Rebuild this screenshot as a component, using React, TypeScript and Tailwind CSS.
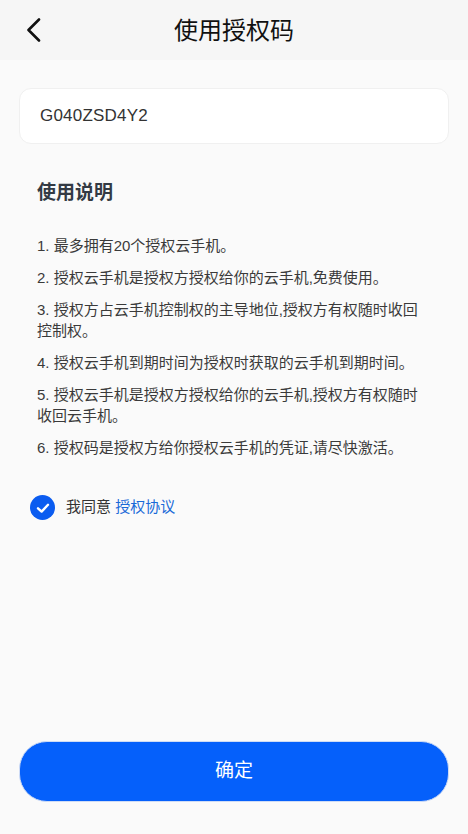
import React from "react";

const rules = [
  "1. 最多拥有20个授权云手机。",
  "2. 授权云手机是授权方授权给你的云手机,免费使用。",
  "3. 授权方占云手机控制权的主导地位,授权方有权随时收回控制权。",
  "4. 授权云手机到期时间为授权时获取的云手机到期时间。",
  "5. 授权云手机是授权方授权给你的云手机,授权方有权随时收回云手机。",
  "6. 授权码是授权方给你授权云手机的凭证,请尽快激活。",
];

const font = { fontFamily: '"Liberation Sans", "Noto Sans CJK SC", sans-serif' };

export default function App() {
  return (
    <div className="min-h-screen flex flex-col bg-[#fafafa]" style={font}>
      {/* header */}
      <div className="h-[60px] grid grid-cols-[60px_1fr_60px] items-center bg-[#f6f6f6]">
        <button className="h-full flex items-center pl-[26px]">
          <svg width="16" height="24" viewBox="0 0 16 24" fill="none">
            <path d="M13 1.5 L2.5 12 L13 22.5" stroke="#111" strokeWidth="2.6" strokeLinecap="round" strokeLinejoin="round" />
          </svg>
        </button>
        <h1 className="text-center text-[24px] text-[#111] font-normal leading-none pt-[1px]">使用授权码</h1>
        <div />
      </div>

      <div className="px-[19px] pt-[28px]">
        <div className="h-[56px] rounded-[12px] bg-white border border-[#f0f0f0] flex items-center px-[20px]">
          <span className="text-[17px] text-[#333] tracking-[0.2px]">G040ZSD4Y2</span>
        </div>

        <div className="px-[18px]">
          <h2 className="mt-[39px] text-[19px] leading-[20px] font-bold text-[#333a44]">使用说明</h2>
          <ul className="mt-[32px] flex flex-col gap-[11px]">
            {rules.map((r) => (
              <li key={r} className="text-[15px] leading-[21px] text-[#3a3a3a]">
                {r}
              </li>
            ))}
          </ul>
        </div>

        <div className="mt-[37px] pl-[11px] flex items-center gap-[11px]">
          <span className="w-[25px] h-[25px] rounded-full bg-[#0b5cf0] flex items-center justify-center">
            <svg width="14" height="14" viewBox="0 0 14 14" fill="none">
              <path d="M2 7.3 L5.6 10.6 L12 3.8" stroke="#fff" strokeWidth="2.4" strokeLinecap="round" strokeLinejoin="round" />
            </svg>
          </span>
          <span className="text-[15px] text-[#333]">
            我同意 <span className="text-[#1a6ad8]">授权协议</span>
          </span>
        </div>
      </div>

      <div className="mt-auto px-[19px] pb-[32px]">
        <button className="w-full h-[61px] rounded-[28px] bg-[#0560fb] border border-[#cfdcf5] text-white text-[19px]">
          确定
        </button>
      </div>
    </div>
  );
}
